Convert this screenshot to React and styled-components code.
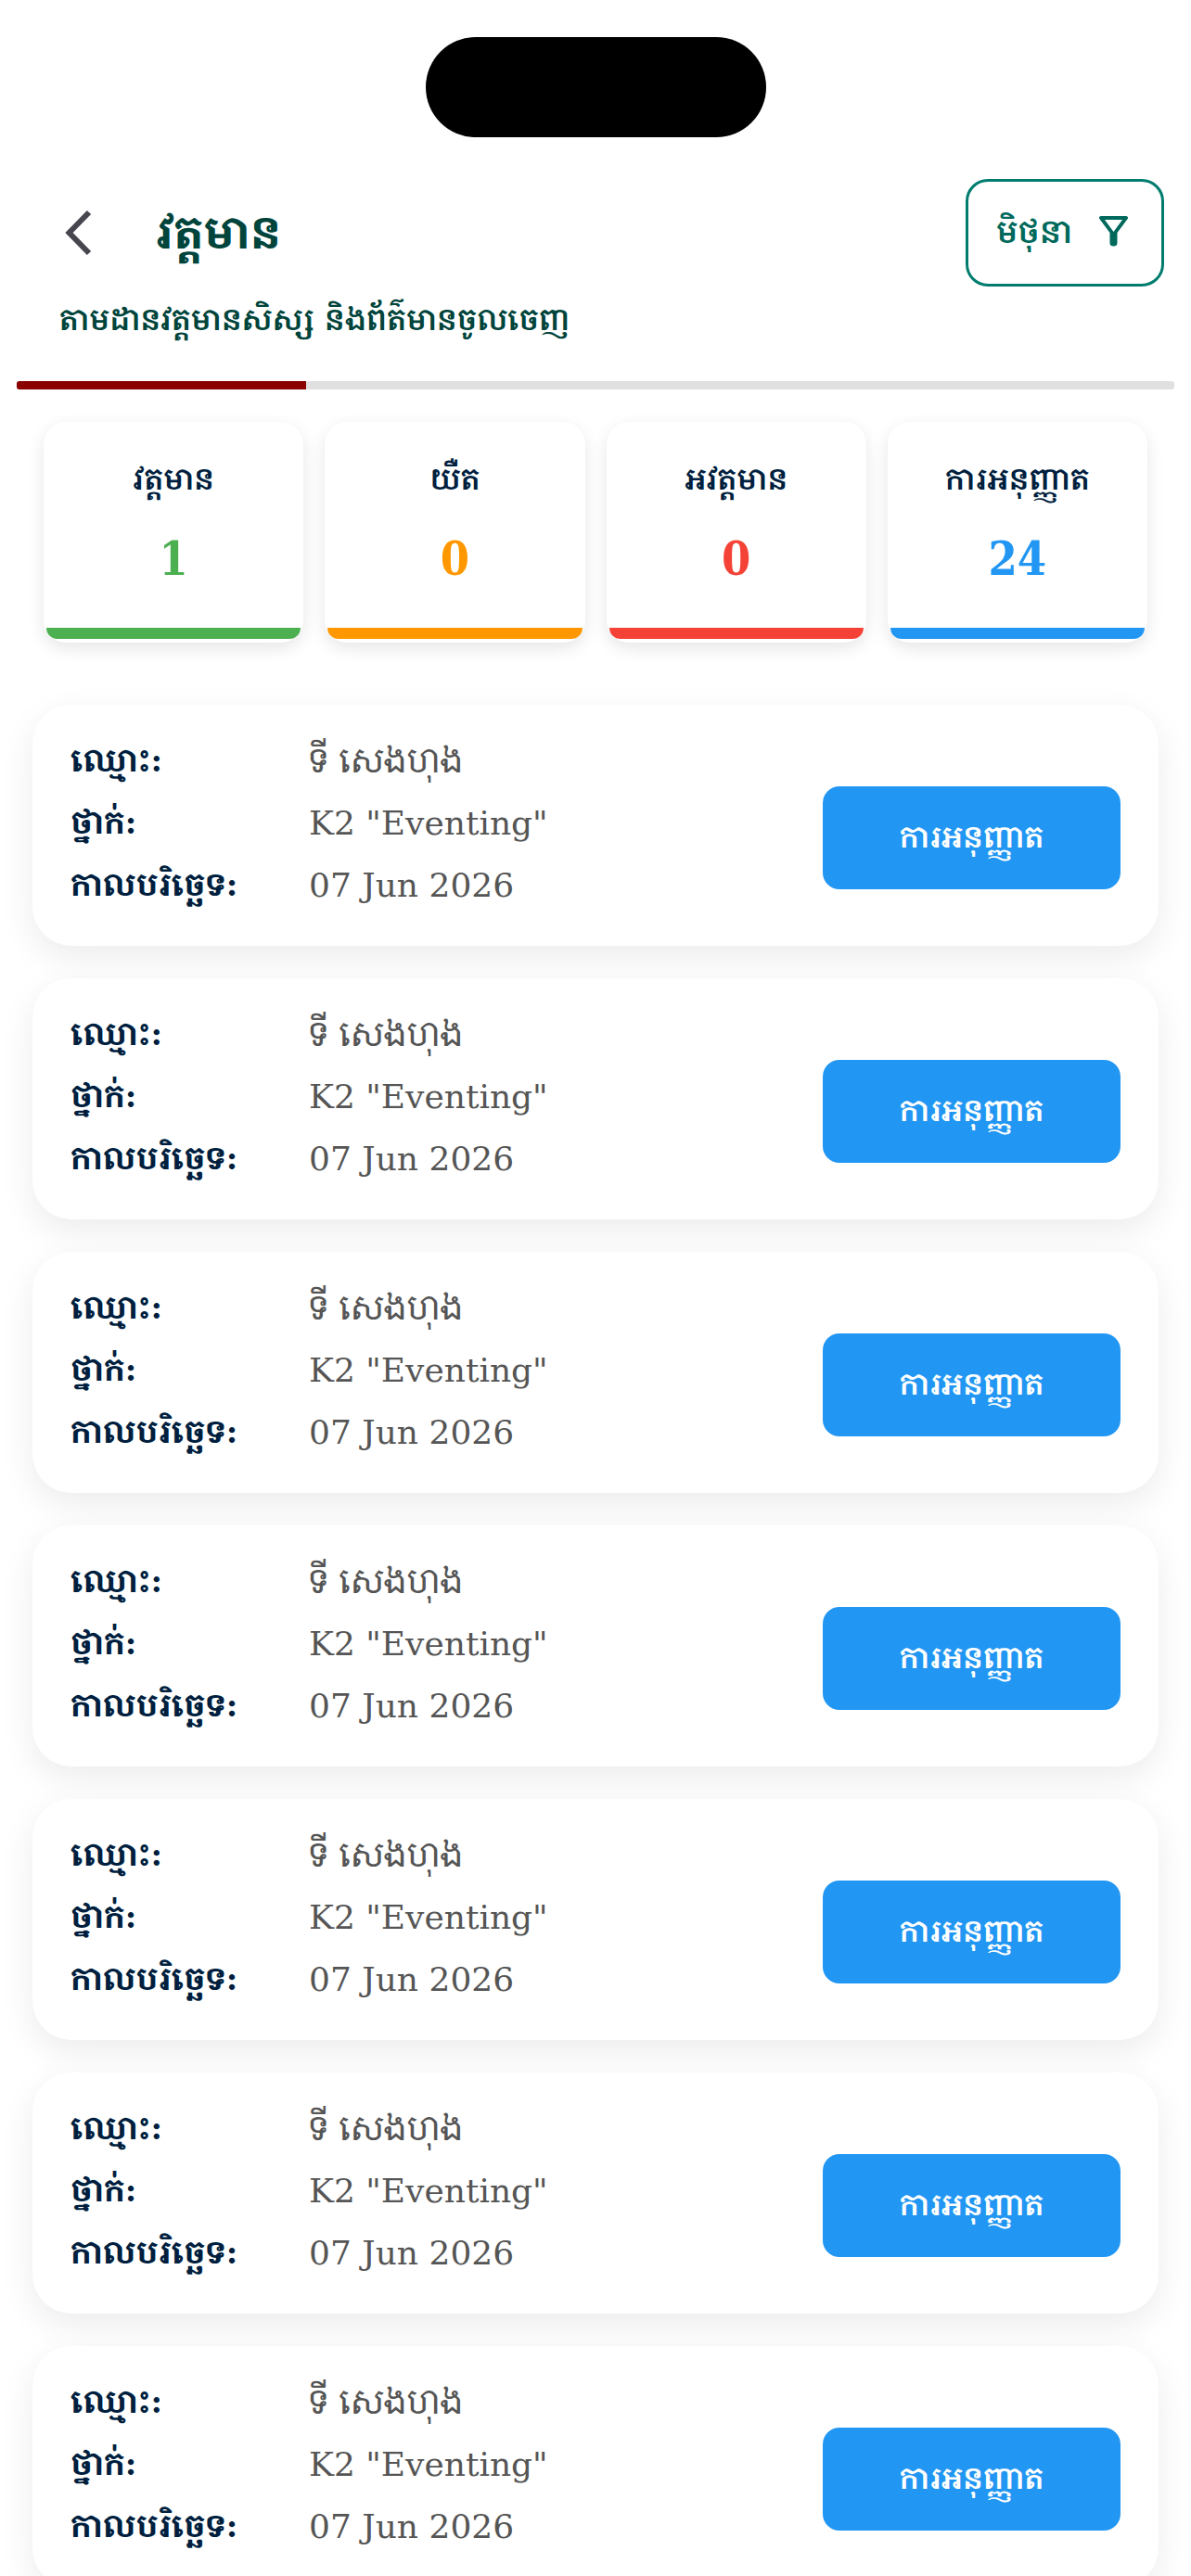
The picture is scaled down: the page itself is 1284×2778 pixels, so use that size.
import React from 'react';
import styled, { createGlobalStyle } from 'styled-components';

const GlobalStyle = createGlobalStyle`
  * {
    box-sizing: border-box;
  }
  body {
    margin: 0;
    background: #fff;
    font-family: 'DejaVu Serif', 'Noto Serif Khmer', 'Khmer OS Battambang', 'Noto Sans Khmer', serif;
  }
  button {
    font-family: inherit;
    cursor: pointer;
  }
`;

const Screen = styled.div`
  width: 100%;
  height: 100vh;
  overflow: hidden;
`;

const StatusBar = styled.div`
  display: flex;
  justify-content: center;
  padding-top: 40px;
`;

const Island = styled.div`
  width: 367px;
  height: 108px;
  border-radius: 54px;
  background: #000;
`;

const Header = styled.header`
  padding: 45px 29px 0 64px;
`;

const TopBar = styled.div`
  display: flex;
  align-items: center;
  height: 116px;
`;

const BackButton = styled.button`
  display: flex;
  padding: 0;
  border: 0;
  background: none;
`;

const Title = styled.h1`
  flex: 1;
  margin: 0 0 0 68px;
  font-size: 48px;
  line-height: 72px;
  font-weight: 700;
  color: #00443b;
`;

const FilterButton = styled.button`
  display: flex;
  align-items: center;
  justify-content: space-between;
  width: 214px;
  height: 116px;
  padding: 0 36px 4px 30px;
  border: 3px solid #007c6e;
  border-radius: 24px;
  background: #fff;
  color: #00695c;
  font-size: 34px;
  font-weight: 600;
`;

const Subtitle = styled.p`
  margin: 6px 0 0;
  font-size: 32px;
  line-height: 60px;
  font-weight: 600;
  color: #00443b;
`;

const Track = styled.div`
  height: 9px;
  margin: 36px 18px 0;
  border-radius: 3px;
  background: #e0e0e0;
  overflow: hidden;
`;

const TrackFill = styled.div`
  width: 25%;
  height: 100%;
  background: #8b0000;
`;

const Stats = styled.section`
  display: grid;
  grid-template-columns: repeat(4, 1fr);
  gap: 23px;
  padding: 35px 47px 0;
`;

const StatCard = styled.div`
  display: flex;
  flex-direction: column;
  align-items: center;
  height: 238px;
  padding: 32px 3px 4px;
  border-radius: 24px;
  background: #fff;
  box-shadow: 0 6px 18px rgba(0, 0, 0, 0.1);
`;

const StatLabel = styled.span`
  font-size: 32px;
  line-height: 60px;
  font-weight: 600;
  color: #001f3f;
`;

const StatValue = styled.span`
  margin-top: 24px;
  font-family: 'DejaVu Serif Condensed', 'DejaVu Serif', serif;
  font-size: 50px;
  line-height: 64px;
  font-weight: 700;
  color: ${(props) => props.$color};
`;

const StatBar = styled.div`
  width: 100%;
  height: 12px;
  margin-top: auto;
  border-radius: 0 0 20px 20px;
  background: ${(props) => props.$color};
`;

const List = styled.ul`
  display: flex;
  flex-direction: column;
  gap: 35px;
  margin: 0;
  padding: 67px 35px 0;
  list-style: none;
`;

const Card = styled.li`
  display: flex;
  align-items: center;
  justify-content: space-between;
  height: 260px;
  padding: 0 41px;
  border-radius: 42px;
  background: #fff;
  box-shadow: 0 12px 36px rgba(0, 0, 0, 0.08);
`;

const Details = styled.dl`
  display: grid;
  grid-template-columns: 257px auto;
  grid-auto-rows: 67px;
  align-items: center;
  margin: 0;
  padding-bottom: 6px;
`;

const Term = styled.dt`
  font-size: 34px;
  line-height: 67px;
  font-weight: 700;
  color: #001f3f;
`;

const Value = styled.dd`
  margin: 0;
  font-size: 36px;
  line-height: 67px;
  color: #555;
`;

const StatusButton = styled.button`
  width: 321px;
  height: 111px;
  margin-top: 27px;
  padding: 0 0 4px;
  border: 0;
  border-radius: 18px;
  background: #2196f3;
  color: #fff;
  font-size: 32px;
  font-weight: 600;
`;

const stats = [
  { label: 'វត្តមាន', value: 1, color: '#4caf50' },
  { label: 'យឺត', value: 0, color: '#ff9800' },
  { label: 'អវត្តមាន', value: 0, color: '#f44336' },
  { label: 'ការអនុញ្ញាត', value: 24, color: '#2196f3' },
];

const records = Array.from({ length: 7 }, (_, id) => ({
  id,
  name: 'ទី សេងហុង',
  className: 'K2 "Eventing"',
  date: '07 Jun 2026',
  status: 'ការអនុញ្ញាត',
}));

const BackIcon = () => (
  <svg width='36' height='50' viewBox='0 0 36 50' fill='none'>
    <path d='M32 3 10.5 25 32 47' stroke='#47464f' strokeWidth='6' />
  </svg>
);

const FilterIcon = () => (
  <svg width='31' height='33' viewBox='0 0 31 33'>
    <path
      fill='currentColor'
      fillRule='evenodd'
      d='M2 0h27c1.800 0 2.600 1.800 1.500 3.200L19.500 18V29a4 3.500 0 0 1-4 3.500A4 3.500 0 0 1 11.500 29V18L.5 3.200C-.6 1.800.2 0 2 0zM6 4l9.500 13L25 4z'
    />
  </svg>
);

const Record = ({ record }) => (
  <Card>
    <Details>
      <Term>ឈ្មោះ:</Term>
      <Value>{record.name}</Value>
      <Term>ថ្នាក់:</Term>
      <Value>{record.className}</Value>
      <Term>កាលបរិច្ឆេទ:</Term>
      <Value>{record.date}</Value>
    </Details>
    <StatusButton type='button'>{record.status}</StatusButton>
  </Card>
);

const App = () => (
  <>
    <GlobalStyle />
    <Screen>
      <StatusBar>
        <Island />
      </StatusBar>
      <Header>
        <TopBar>
          <BackButton type='button' aria-label='ថយក្រោយ'>
            <BackIcon />
          </BackButton>
          <Title>វត្តមាន</Title>
          <FilterButton type='button'>
            មិថុនា
            <FilterIcon />
          </FilterButton>
        </TopBar>
        <Subtitle>តាមដានវត្តមានសិស្ស និងព័ត៌មានចូលចេញ</Subtitle>
      </Header>
      <Track>
        <TrackFill />
      </Track>
      <Stats>
        {stats.map((stat) => (
          <StatCard key={stat.label}>
            <StatLabel>{stat.label}</StatLabel>
            <StatValue $color={stat.color}>{stat.value}</StatValue>
            <StatBar $color={stat.color} />
          </StatCard>
        ))}
      </Stats>
      <List>
        {records.map((record) => (
          <Record key={record.id} record={record} />
        ))}
      </List>
    </Screen>
  </>
);

export default App;
